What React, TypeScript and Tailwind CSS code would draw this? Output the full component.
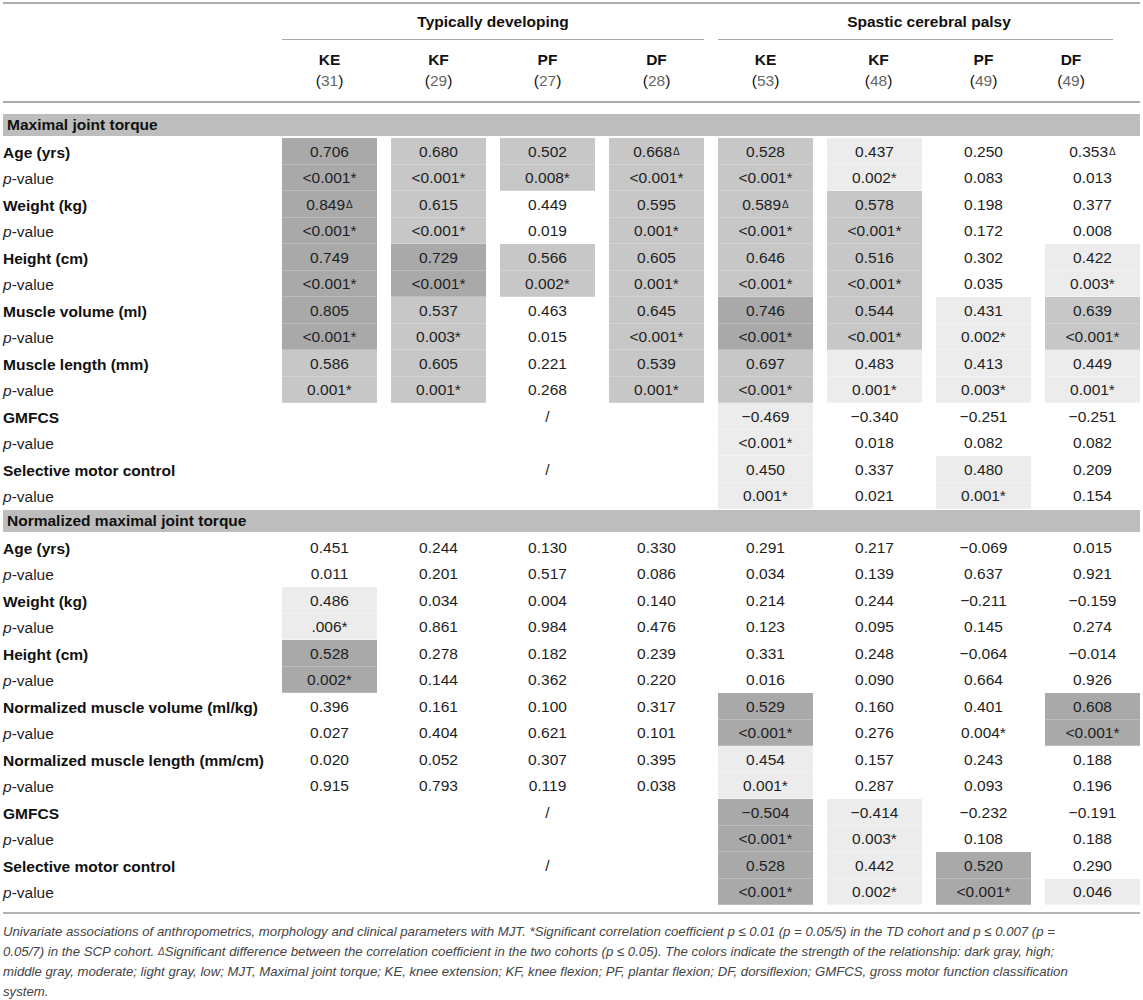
type Row = {
  label: string;
  values: string[];
  pvals: string[];
  shade: string;
  pshade?: string;
};

type Section = {
  title: string;
  rows: Row[];
};

const split = (s: string) => s.split(" ");

const sections: Section[] = [
  {
    title: "Maximal joint torque",
    rows: [
      {
        label: "Age (yrs)",
        values: split("0.706 0.680 0.502 0.668Δ 0.528 0.437 0.250 0.353Δ"),
        pvals: split("<0.001* <0.001* 0.008* <0.001* <0.001* 0.002* 0.083 0.013"),
        shade: "DMMMML--",
      },
      {
        label: "Weight (kg)",
        values: split("0.849Δ 0.615 0.449 0.595 0.589Δ 0.578 0.198 0.377"),
        pvals: split("<0.001* <0.001* 0.019 0.001* <0.001* <0.001* 0.172 0.008"),
        shade: "DM-MMM--",
      },
      {
        label: "Height (cm)",
        values: split("0.749 0.729 0.566 0.605 0.646 0.516 0.302 0.422"),
        pvals: split("<0.001* <0.001* 0.002* 0.001* <0.001* <0.001* 0.035 0.003*"),
        shade: "DDMMMM-L",
      },
      {
        label: "Muscle volume (ml)",
        values: split("0.805 0.537 0.463 0.645 0.746 0.544 0.431 0.639"),
        pvals: split("<0.001* 0.003* 0.015 <0.001* <0.001* <0.001* 0.002* <0.001*"),
        shade: "DM-MDMLM",
      },
      {
        label: "Muscle length (mm)",
        values: split("0.586 0.605 0.221 0.539 0.697 0.483 0.413 0.449"),
        pvals: split("0.001* 0.001* 0.268 0.001* <0.001* 0.001* 0.003* 0.001*"),
        shade: "MM-MMLLL",
      },
      {
        label: "GMFCS",
        values: ["", "", "/", "", "−0.469", "−0.340", "−0.251", "−0.251"],
        pvals: ["", "", "", "", "<0.001*", "0.018", "0.082", "0.082"],
        shade: "----L---",
      },
      {
        label: "Selective motor control",
        values: ["", "", "/", "", "0.450", "0.337", "0.480", "0.209"],
        pvals: ["", "", "", "", "0.001*", "0.021", "0.001*", "0.154"],
        shade: "----L-L-",
      },
    ],
  },
  {
    title: "Normalized maximal joint torque",
    rows: [
      {
        label: "Age (yrs)",
        values: split("0.451 0.244 0.130 0.330 0.291 0.217 −0.069 0.015"),
        pvals: split("0.011 0.201 0.517 0.086 0.034 0.139 0.637 0.921"),
        shade: "--------",
      },
      {
        label: "Weight (kg)",
        values: split("0.486 0.034 0.004 0.140 0.214 0.244 −0.211 −0.159"),
        pvals: split(".006* 0.861 0.984 0.476 0.123 0.095 0.145 0.274"),
        shade: "L-------",
      },
      {
        label: "Height (cm)",
        values: split("0.528 0.278 0.182 0.239 0.331 0.248 −0.064 −0.014"),
        pvals: split("0.002* 0.144 0.362 0.220 0.016 0.090 0.664 0.926"),
        shade: "D-------",
      },
      {
        label: "Normalized muscle volume (ml/kg)",
        values: split("0.396 0.161 0.100 0.317 0.529 0.160 0.401 0.608"),
        pvals: split("0.027 0.404 0.621 0.101 <0.001* 0.276 0.004* <0.001*"),
        shade: "----D--D",
      },
      {
        label: "Normalized muscle length (mm/cm)",
        values: split("0.020 0.052 0.307 0.395 0.454 0.157 0.243 0.188"),
        pvals: split("0.915 0.793 0.119 0.038 0.001* 0.287 0.093 0.196"),
        shade: "----L---",
      },
      {
        label: "GMFCS",
        values: ["", "", "/", "", "−0.504", "−0.414", "−0.232", "−0.191"],
        pvals: ["", "", "", "", "<0.001*", "0.003*", "0.108", "0.188"],
        shade: "----DL--",
      },
      {
        label: "Selective motor control",
        values: ["", "", "/", "", "0.528", "0.442", "0.520", "0.290"],
        pvals: ["", "", "", "", "<0.001*", "0.002*", "<0.001*", "0.046"],
        shade: "----DLD-",
        pshade: "----DLDL",
      },
    ],
  },
];

const columns = [
  { name: "KE", n: "31" },
  { name: "KF", n: "29" },
  { name: "PF", n: "27" },
  { name: "DF", n: "28" },
  { name: "KE", n: "53" },
  { name: "KF", n: "48" },
  { name: "PF", n: "49" },
  { name: "DF", n: "49" },
];

const shadeClass = (c: string) => {
  if (c === "D") return "bg-[#a9a9a9] shadow-[inset_0_-1px_0_rgba(255,255,255,0.22)]";
  if (c === "M") return "bg-[#c7c7c7] shadow-[inset_0_-1px_0_rgba(255,255,255,0.22)]";
  if (c === "L") return "bg-[#ececec] shadow-[inset_0_-1px_0_rgba(255,255,255,0.4)]";
  return "";
};

const Value = ({ text }: { text: string }) => {
  if (text.endsWith("Δ")) {
    return (
      <span>
        {text.slice(0, -1)}
        <sup className="text-[10px] relative -top-[2px] ml-[1px]">Δ</sup>
      </span>
    );
  }
  return <span>{text}</span>;
};

const DataRow = ({
  label,
  isP,
  values,
  shade,
}: {
  label: string;
  isP: boolean;
  values: string[];
  shade: string;
}) => (
  <div className="flex h-[26.5px]">
    <div
      className={`w-[280px] flex items-center pt-[2px] text-[15.5px] ${
        isP ? "text-[#1e1e1e]" : "font-bold text-[#111]"
      }`}
    >
      {isP ? (
        <span>
          <i>p</i>-value
        </span>
      ) : (
        label
      )}
    </div>
    <div className="flex gap-[14px]">
      {values.map((v, i) => (
        <div
          key={i}
          className={`w-[95px] flex items-center justify-center text-[15.5px] text-[#1e1e1e] ${shadeClass(
            shade[i]
          )}`}
        >
          <Value text={v} />
        </div>
      ))}
    </div>
  </div>
);

const SectionBar = ({ title }: { title: string }) => (
  <div className="h-[22px] w-[1137px] bg-[#bdbdbd] flex items-center pl-[4px] text-[15.5px] font-bold text-[#111]">
    {title}
  </div>
);

const App = () => {
  return (
    <div className="w-[1143px] bg-white pt-[2px] px-[3px] font-['Liberation_Sans',Arial,sans-serif] text-[#222]">
      {/* Top rule */}
      <div className="h-[2px] w-[1137px] bg-[#ababab]" />

      {/* Group headers */}
      <div className="flex">
        <div className="w-[280px]" />
        <div className="flex gap-[14px]">
          <div className="w-[422px] flex flex-col">
            <div className="h-[35px] flex items-center justify-center text-[15.5px] font-bold text-[#111]">
              Typically developing
            </div>
            <div className="h-[1px] bg-[#a9a9a9]" />
          </div>
          <div className="w-[422px] flex flex-col">
            <div className="h-[35px] flex items-center justify-center text-[15.5px] font-bold text-[#111]">
              Spastic cerebral palsy
            </div>
            <div className="h-[1px] w-[395px] bg-[#a9a9a9]" />
          </div>
        </div>
      </div>

      {/* Column headers */}
      <div className="flex pt-[9px] pb-[10px]">
        <div className="w-[280px]" />
        <div className="flex gap-[14px]">
          {columns.map((c, i) => (
            <div
              key={i}
              className={`w-[95px] flex flex-col items-center leading-[21px] text-[15.5px] ${
                i === 7 ? "pr-[43px]" : i === 5 ? "pl-[8px]" : ""
              }`}
            >
              <span className="font-bold text-[#111]">{c.name}</span>
              <span className="text-[#111]">
                (<span className="text-[#666]">{c.n}</span>)
              </span>
            </div>
          ))}
        </div>
      </div>
      <div className="h-[2px] w-[1137px] bg-[#ababab]" />

      {/* Body */}
      <div className="mt-[11px]">
        {sections.map((s, si) => (
          <div key={s.title} className={si === 0 ? "" : "mt-[1px]"}>
            <SectionBar title={s.title} />
            <div className="mt-[2px]">
              {s.rows.map((r) => (
                <div key={r.label}>
                  <DataRow label={r.label} isP={false} values={r.values} shade={r.shade} />
                  <DataRow label={r.label} isP={true} values={r.pvals} shade={r.pshade ?? r.shade} />
                </div>
              ))}
            </div>
          </div>
        ))}
      </div>

      {/* Bottom rule */}
      <div className="mt-[7px] h-[2px] w-[1137px] bg-[#b3b3b3]" />

      {/* Footnote */}
      <div className="mt-[8px] italic text-[13.2px] leading-[20px] text-[#444] whitespace-nowrap">
        <div>
          Univariate associations of anthropometrics, morphology and clinical parameters with MJT. *Significant correlation coefficient p ≤ 0.01 (p = 0.05/5) in the TD cohort and p ≤ 0.007 (p =
        </div>
        <div>
          0.05/7) in the SCP cohort. <sup className="text-[10px] relative -top-[1px]">Δ</sup>Significant difference between the correlation coefficient in the two cohorts (p ≤ 0.05). The colors indicate the strength of the relationship: dark gray, high;
        </div>
        <div>
          middle gray, moderate; light gray, low; MJT, Maximal joint torque; KE, knee extension; KF, knee flexion; PF, plantar flexion; DF, dorsiflexion; GMFCS, gross motor function classification
        </div>
        <div>system.</div>
      </div>
    </div>
  );
};

export default App;
